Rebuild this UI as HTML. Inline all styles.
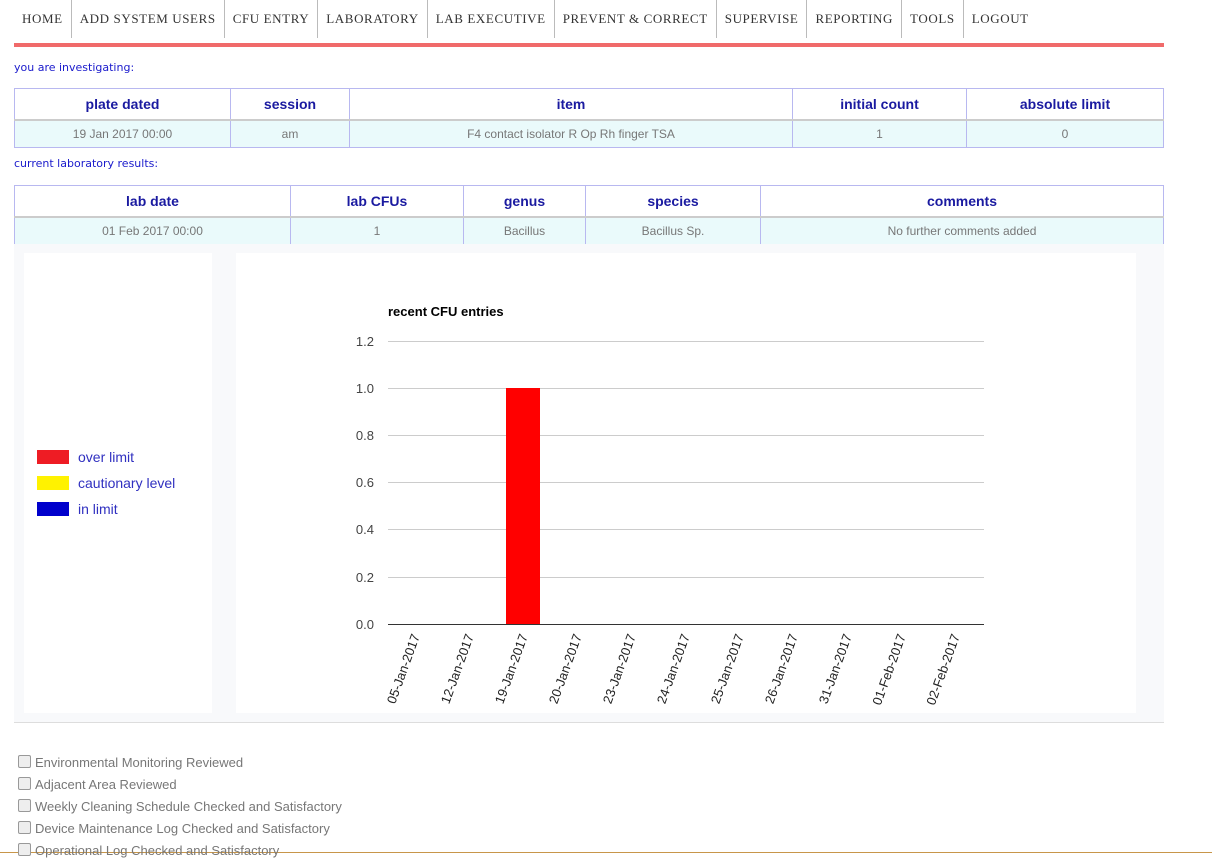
<!DOCTYPE html>
<html><head><meta charset="utf-8"><style>
body{margin:0;width:1212px;height:853px;overflow:hidden;background:#fff;font-family:"Liberation Sans",sans-serif;position:relative}
.nav{position:absolute;left:14px;top:0;width:1150px;height:38px;display:flex}
.nav div{font-family:"Liberation Serif",serif;font-size:13px;letter-spacing:0.6px;color:#333;padding:0 8px;line-height:38px;border-right:1px solid #bbb;height:38px;box-sizing:border-box}
.nav div:last-child{border-right:none}
.bar{position:absolute;left:14px;top:43px;width:1150px;height:4px;background:#f06a6a}
.lbl{position:absolute;left:14px;font-family:"DejaVu Sans",sans-serif;font-size:11px;color:#1a1acc}
table{position:absolute;left:14px;width:1150px;border-collapse:collapse;table-layout:fixed}
th{color:#1a1aa0;font-size:14px;font-weight:bold;height:28px;border:1px solid #b8b8f0;border-bottom:2px solid #ccc;background:#fff}
td{color:#777;font-size:12px;text-align:center;height:24px;background:#eafafb;border:1px solid #b8b8f0}
.p{position:absolute;background:#fff}
.leg{position:absolute;left:37px;font-size:14px;color:#3030c0}
.leg span{display:inline-block;width:32px;height:14px;vertical-align:-2px;margin-right:9px}
.ck{position:absolute;left:18px;font-size:13px;color:#777}
.ck i{display:inline-block;width:11px;height:11px;border:1px solid #999;border-radius:2px;background:#eee;margin-right:4px;vertical-align:-1px}
</style></head><body>
<div class="nav"><div>HOME</div><div>ADD SYSTEM USERS</div><div>CFU ENTRY</div><div>LABORATORY</div><div>LAB EXECUTIVE</div><div>PREVENT &amp; CORRECT</div><div>SUPERVISE</div><div>REPORTING</div><div>TOOLS</div><div>LOGOUT</div></div>
<div class="bar"></div>
<div class="lbl" style="top:61px">you are investigating:</div>
<table style="top:88px"><colgroup><col style="width:216px"><col style="width:119px"><col style="width:443px"><col style="width:174px"><col></colgroup>
<tr><th>plate dated</th><th>session</th><th>item</th><th>initial count</th><th>absolute limit</th></tr>
<tr><td>19 Jan 2017 00:00</td><td>am</td><td>F4 contact isolator R Op Rh finger TSA</td><td>1</td><td>0</td></tr></table>
<div class="lbl" style="top:157px">current laboratory results:</div>
<table style="top:185px"><colgroup><col style="width:276px"><col style="width:173px"><col style="width:122px"><col style="width:175px"><col></colgroup>
<tr><th>lab date</th><th>lab CFUs</th><th>genus</th><th>species</th><th>comments</th></tr>
<tr><td>01 Feb 2017 00:00</td><td>1</td><td>Bacillus</td><td>Bacillus Sp.</td><td>No further comments added</td></tr></table>
<div style="position:absolute;left:14px;top:244px;width:1150px;height:478px;background:#f8f9fb;border-bottom:1px solid #ddd"></div>
<div class="p" style="left:24px;top:253px;width:188px;height:460px"></div>
<div class="leg" style="top:449px"><span style="background:#ee1c24"></span>over limit</div>
<div class="leg" style="top:475px"><span style="background:#fff200"></span>cautionary level</div>
<div class="leg" style="top:501px"><span style="background:#0000cc"></span>in limit</div>
<div class="p" style="left:236px;top:253px;width:900px;height:460px"></div>
<svg style="position:absolute;left:0;top:0" width="1212" height="853" font-family="Liberation Sans, sans-serif">
<text x="388" y="316" font-size="13" font-weight="bold">recent CFU entries</text>
<g stroke="#ccc"><line x1="388" x2="984" y1="341.5" y2="341.5"/><line x1="388" x2="984" y1="388.5" y2="388.5"/><line x1="388" x2="984" y1="435.5" y2="435.5"/><line x1="388" x2="984" y1="482.5" y2="482.5"/><line x1="388" x2="984" y1="529.5" y2="529.5"/><line x1="388" x2="984" y1="577.5" y2="577.5"/></g>
<g font-size="13" fill="#444" text-anchor="end"><text x="374" y="346">1.2</text><text x="374" y="393">1.0</text><text x="374" y="440">0.8</text><text x="374" y="487">0.6</text><text x="374" y="534">0.4</text><text x="374" y="582">0.2</text><text x="374" y="629">0.0</text></g>
<rect x="506" y="388" width="34" height="236" fill="#f00"/>
<line x1="388" x2="984" y1="624.5" y2="624.5" stroke="#333"/>
<g font-size="13" fill="#222" text-anchor="end">
<text transform="translate(420,636) rotate(-70)">05-Jan-2017</text>
<text transform="translate(474,636) rotate(-70)">12-Jan-2017</text>
<text transform="translate(528,636) rotate(-70)">19-Jan-2017</text>
<text transform="translate(582,636) rotate(-70)">20-Jan-2017</text>
<text transform="translate(636,636) rotate(-70)">23-Jan-2017</text>
<text transform="translate(690,636) rotate(-70)">24-Jan-2017</text>
<text transform="translate(744,636) rotate(-70)">25-Jan-2017</text>
<text transform="translate(798,636) rotate(-70)">26-Jan-2017</text>
<text transform="translate(852,636) rotate(-70)">31-Jan-2017</text>
<text transform="translate(906,636) rotate(-70)">01-Feb-2017</text>
<text transform="translate(960,636) rotate(-70)">02-Feb-2017</text>
</g>
<line x1="0" x2="1212" y1="852.5" y2="852.5" stroke="#c8964a"/>
</svg>
<div class="ck" style="top:755px"><i></i>Environmental Monitoring Reviewed</div>
<div class="ck" style="top:777px"><i></i>Adjacent Area Reviewed</div>
<div class="ck" style="top:799px"><i></i>Weekly Cleaning Schedule Checked and Satisfactory</div>
<div class="ck" style="top:821px"><i></i>Device Maintenance Log Checked and Satisfactory</div>
<div class="ck" style="top:843px"><i></i>Operational Log Checked and Satisfactory</div>
</body></html>
